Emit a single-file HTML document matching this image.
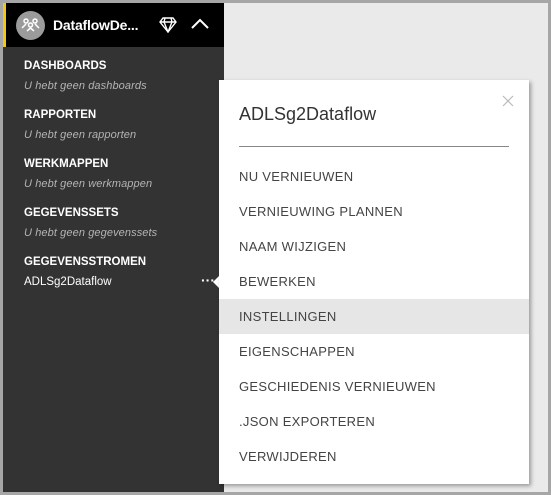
<!DOCTYPE html>
<html><head><style>
*{margin:0;padding:0;box-sizing:border-box}
body{width:551px;height:495px;background:#a6a6a6;position:relative;overflow:hidden;font-family:"Liberation Sans",sans-serif}
.frame{position:absolute;left:3px;top:3px;width:545px;height:489px;background:#eaeaea}
.side{position:absolute;left:3px;top:3px;width:221px;height:489px;background:#333}
.head{position:absolute;left:3px;top:3px;width:221px;height:44px;background:#000;border-left:3px solid #f2c811}
.av{position:absolute;left:10px;top:8px;width:29px;height:29px;border-radius:50%;background:#9b9b9b}
.name{position:absolute;left:47px;top:14px;color:#fff;font-size:14px;font-weight:bold;letter-spacing:-.2px}
.sec{position:absolute;left:24px;color:#fff;font-size:11.5px;font-weight:bold}
.sub{position:absolute;left:24px;color:#b4b4b4;font-size:11px;font-style:italic;letter-spacing:.1px}
.pop{position:absolute;left:219px;top:80px;width:310px;height:404px;background:#fff;box-shadow:2px 2px 4px rgba(0,0,0,.35)}
.title{position:absolute;left:20px;top:24px;font-size:18px;color:#333}
.line{position:absolute;left:20px;top:66px;width:270px;height:1px;background:#888}
.it{position:absolute;left:0;width:310px;height:35px;padding-left:20px;line-height:35px;font-size:13px;color:#444;letter-spacing:.3px}
.hl{background:#e6e6e6}
</style></head><body>
<div class="frame"></div>
<div class="side"></div>
<div class="head">
<div class="av"><svg width="29" height="29" viewBox="0 0 29 29" fill="none" stroke="#fff" stroke-width="1.5"><circle cx="10" cy="10" r="2"/><circle cx="19" cy="10" r="2"/><circle cx="14.5" cy="14" r="2"/><path d="M6 17l4-4 M23 17l-4-4 M11 20l3.5-3 3.5 3"/></svg></div>
<div class="name">DataflowDe...</div>
<svg style="position:absolute;left:153px;top:14px" width="18" height="16" viewBox="0 0 18 16" fill="none" stroke="#fff" stroke-width="1.4"><path d="M4 1h10l3 4-8 10L1 5z M1 5h16 M6 1l-1 4 4 10 4-10-1-4"/></svg>
<svg style="position:absolute;left:185px;top:15px" width="18" height="12" viewBox="0 0 18 12" fill="none" stroke="#fff" stroke-width="2"><path d="M1 10l8-8 8 8"/></svg>
</div>
<div class="sec" style="top:60px">DASHBOARDS</div>
<div class="sub" style="top:80px">U hebt geen dashboards</div>
<div class="sec" style="top:109px">RAPPORTEN</div>
<div class="sub" style="top:129px">U hebt geen rapporten</div>
<div class="sec" style="top:158px">WERKMAPPEN</div>
<div class="sub" style="top:178px">U hebt geen werkmappen</div>
<div class="sec" style="top:207px">GEGEVENSSETS</div>
<div class="sub" style="top:227px">U hebt geen gegevenssets</div>
<div class="sec" style="top:256px">GEGEVENSSTROMEN</div>
<div class="sec" style="top:276px;font-weight:normal">ADLSg2Dataflow</div>
<div style="position:absolute;left:201px;top:272px;color:#fff;font-size:14px;font-weight:bold">···</div>
<div style="position:absolute;left:213px;top:275px;width:0;height:0;border-top:7px solid transparent;border-bottom:7px solid transparent;border-right:7px solid #fff"></div>
<div class="pop">
<div class="title">ADLSg2Dataflow</div>
<svg style="position:absolute;left:283px;top:15px" width="12" height="12" viewBox="0 0 12 12" stroke="#bbb" stroke-width="1.2"><path d="M1 1l10 10M11 1L1 11"/></svg>
<div class="line"></div>
<div class="it" style="top:79px">NU VERNIEUWEN</div>
<div class="it" style="top:114px">VERNIEUWING PLANNEN</div>
<div class="it" style="top:149px">NAAM WIJZIGEN</div>
<div class="it" style="top:184px">BEWERKEN</div>
<div class="it hl" style="top:219px">INSTELLINGEN</div>
<div class="it" style="top:254px">EIGENSCHAPPEN</div>
<div class="it" style="top:289px">GESCHIEDENIS VERNIEUWEN</div>
<div class="it" style="top:324px">.JSON EXPORTEREN</div>
<div class="it" style="top:359px">VERWIJDEREN</div>
</div>
</body></html>
